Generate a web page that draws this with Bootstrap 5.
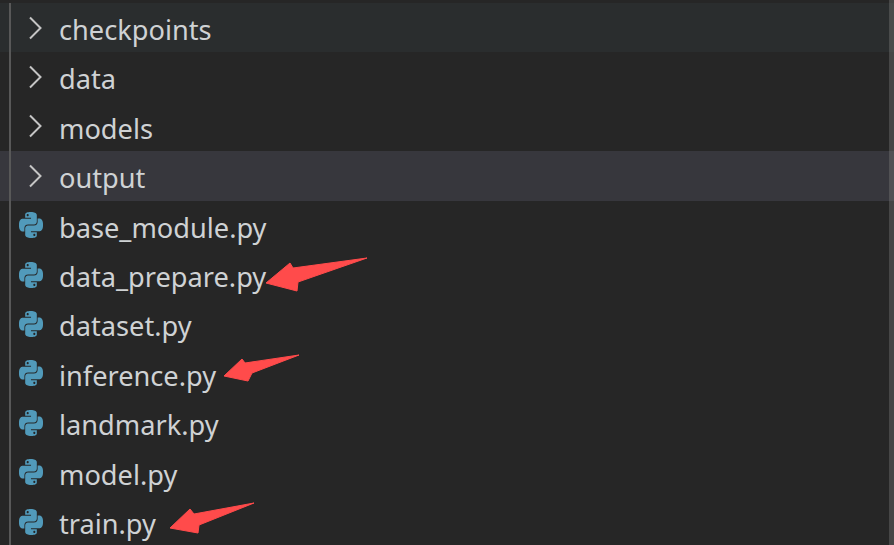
<!DOCTYPE html>
<html lang="en">
<head>
  <meta charset="UTF-8">
  <title>Explorer</title>
  <link href="https://cdn.jsdelivr.net/npm/bootstrap@5.3.0/dist/css/bootstrap.min.css" rel="stylesheet">
  <script src="https://cdn.jsdelivr.net/npm/bootstrap@5.3.0/dist/js/bootstrap.bundle.min.js"></script>
  <style>
    html, body {
      height: 545px;
      overflow: hidden;
      background: #262626;
    }

    .explorer {
      height: 545px;
      padding-top: 3px;
      font-family: "Noto Sans", "Open Sans", sans-serif;
      font-size: 27.2px;
      color: #cfd2d4;
      overflow: hidden;
    }

    .tree-row {
      height: 49.4px;
      padding-left: 59px;
      padding-top: 4px;
      line-height: 1;
    }

    .row-hover { background: #2a2d2e; }
    .row-picked { background: #37373d; }

    .tree-icon { left: 19px; width: 24px; height: 26px; fill: #519aba; }
    .tree-chevron { left: 28px; width: 15px; height: 24px; fill: none; stroke: #c5c5c5; stroke-width: 2; }

    /* indent guide and scrollbar lie over the rows */
    .indent-guide { left: 9px; top: 3px; bottom: 0; width: 2px; background: #585858; }
    .scroll-thumb { right: 0; top: 0; bottom: 0; width: 5px; background: rgba(121, 121, 121, .4); }
    .arrows { left: 0; top: 0; fill: #ff4b4b; stroke: #ff4b4b; stroke-width: 1; stroke-linejoin: round; }
  </style>
</head>
<body>
  <svg width="0" height="0" class="position-absolute">
    <symbol id="py" viewBox="0 0 24 24" preserveAspectRatio="none">
      <path d="M14.25.18l.9.2.73.26.59.3.45.32.34.34.25.34.16.33.1.3.04.26.02.2-.01.13V8.5l-.05.63-.13.55-.21.46-.26.38-.3.31-.33.25-.35.19-.35.14-.33.1-.3.07-.26.04-.21.02H8.77l-.69.05-.59.14-.5.22-.41.27-.33.32-.27.35-.2.36-.15.37-.1.35-.07.32-.04.27-.02.21v3.06H3.17l-.21-.03-.28-.07-.32-.12-.35-.18-.36-.26-.36-.36-.35-.46-.32-.59-.28-.73-.21-.88-.14-1.05-.05-1.23.06-1.22.16-1.04.24-.87.32-.71.36-.57.4-.44.42-.33.42-.24.4-.16.36-.1.32-.05.24-.01h.16l.06.01h8.16v-.83H6.18l-.01-2.75-.02-.37.05-.34.11-.31.17-.28.25-.26.31-.23.38-.2.44-.18.51-.15.58-.12.64-.1.71-.06.77-.04.84-.02 1.27.05zm-6.3 1.98l-.23.33-.08.41.08.41.23.34.33.22.41.09.41-.09.33-.22.23-.34.08-.41-.08-.41-.23-.33-.33-.22-.41-.09-.41.09zm13.09 3.95l.28.06.32.12.35.18.36.27.36.35.35.47.32.59.28.73.21.88.14 1.04.05 1.23-.06 1.23-.16 1.04-.24.86-.32.71-.36.57-.4.45-.42.33-.42.24-.4.16-.36.09-.32.05-.24.02-.16-.01h-8.22v.82h5.84l.01 2.76.02.36-.05.34-.11.31-.17.29-.25.25-.31.24-.38.2-.44.17-.51.15-.58.13-.64.09-.71.07-.77.04-.84.01-1.27-.04-1.07-.14-.9-.2-.73-.25-.59-.3-.45-.33-.34-.34-.25-.34-.16-.33-.1-.3-.04-.25-.02-.2.01-.13v-5.34l.05-.64.13-.54.21-.46.26-.38.3-.32.33-.24.35-.2.35-.14.33-.1.3-.06.26-.04.21-.02.13-.01h5.84l.69-.05.59-.14.5-.21.41-.28.33-.32.27-.35.2-.36.15-.36.1-.35.07-.32.04-.28.02-.21V6.07h2.09l.14.01zm-6.47 14.25l-.23.33-.08.41.08.41.23.33.33.23.41.08.41-.08.33-.23.23-.33.08-.41-.08-.41-.23-.33-.33-.23-.41-.08-.41.08z"/>
    </symbol>
  </svg>

  <div class="explorer position-relative" id="tree"></div>

  <script>
    const rows = [
      { name: "checkpoints", dir: true, cls: "row-hover" },
      { name: "data", dir: true },
      { name: "models", dir: true },
      { name: "output", dir: true, cls: "row-picked" },
      { name: "base_module.py" },
      { name: "data_prepare.py" },
      { name: "dataset.py" },
      { name: "inference.py" },
      { name: "landmark.py" },
      { name: "model.py" },
      { name: "train.py" }
    ];

    const tree = document.getElementById("tree");
    rows.forEach((r) => {
      const div = document.createElement("div");
      div.className = `tree-row d-flex align-items-center position-relative ${r.cls || ""}`;
      const icon = r.dir
        ? `<svg class="tree-chevron position-absolute top-50 translate-middle-y" viewBox="0 0 15 24"><path d="M2 1.5 L12.5 12 L2 22.5"/></svg>`
        : `<svg class="tree-icon position-absolute top-50 translate-middle-y"><use href="#py"/></svg>`;
      div.innerHTML = `${icon}<span>${r.name}</span>`;
      tree.appendChild(div);
    });

    tree.insertAdjacentHTML("beforeend", `
      <div class="indent-guide position-absolute"></div>
      <div class="scroll-thumb position-absolute"></div>
      <svg class="arrows position-absolute" width="894" height="545">
        <polygon points="266,283 290,263 293,268 367,258 298,282 297,291"/>
        <polygon points="224,376 242,359 245,363 299,355 252,373 248,381"/>
        <polygon points="170,528 190,509 194,514 254,503 199,525 198,533"/>
      </svg>`);
  </script>
</body>
</html>
